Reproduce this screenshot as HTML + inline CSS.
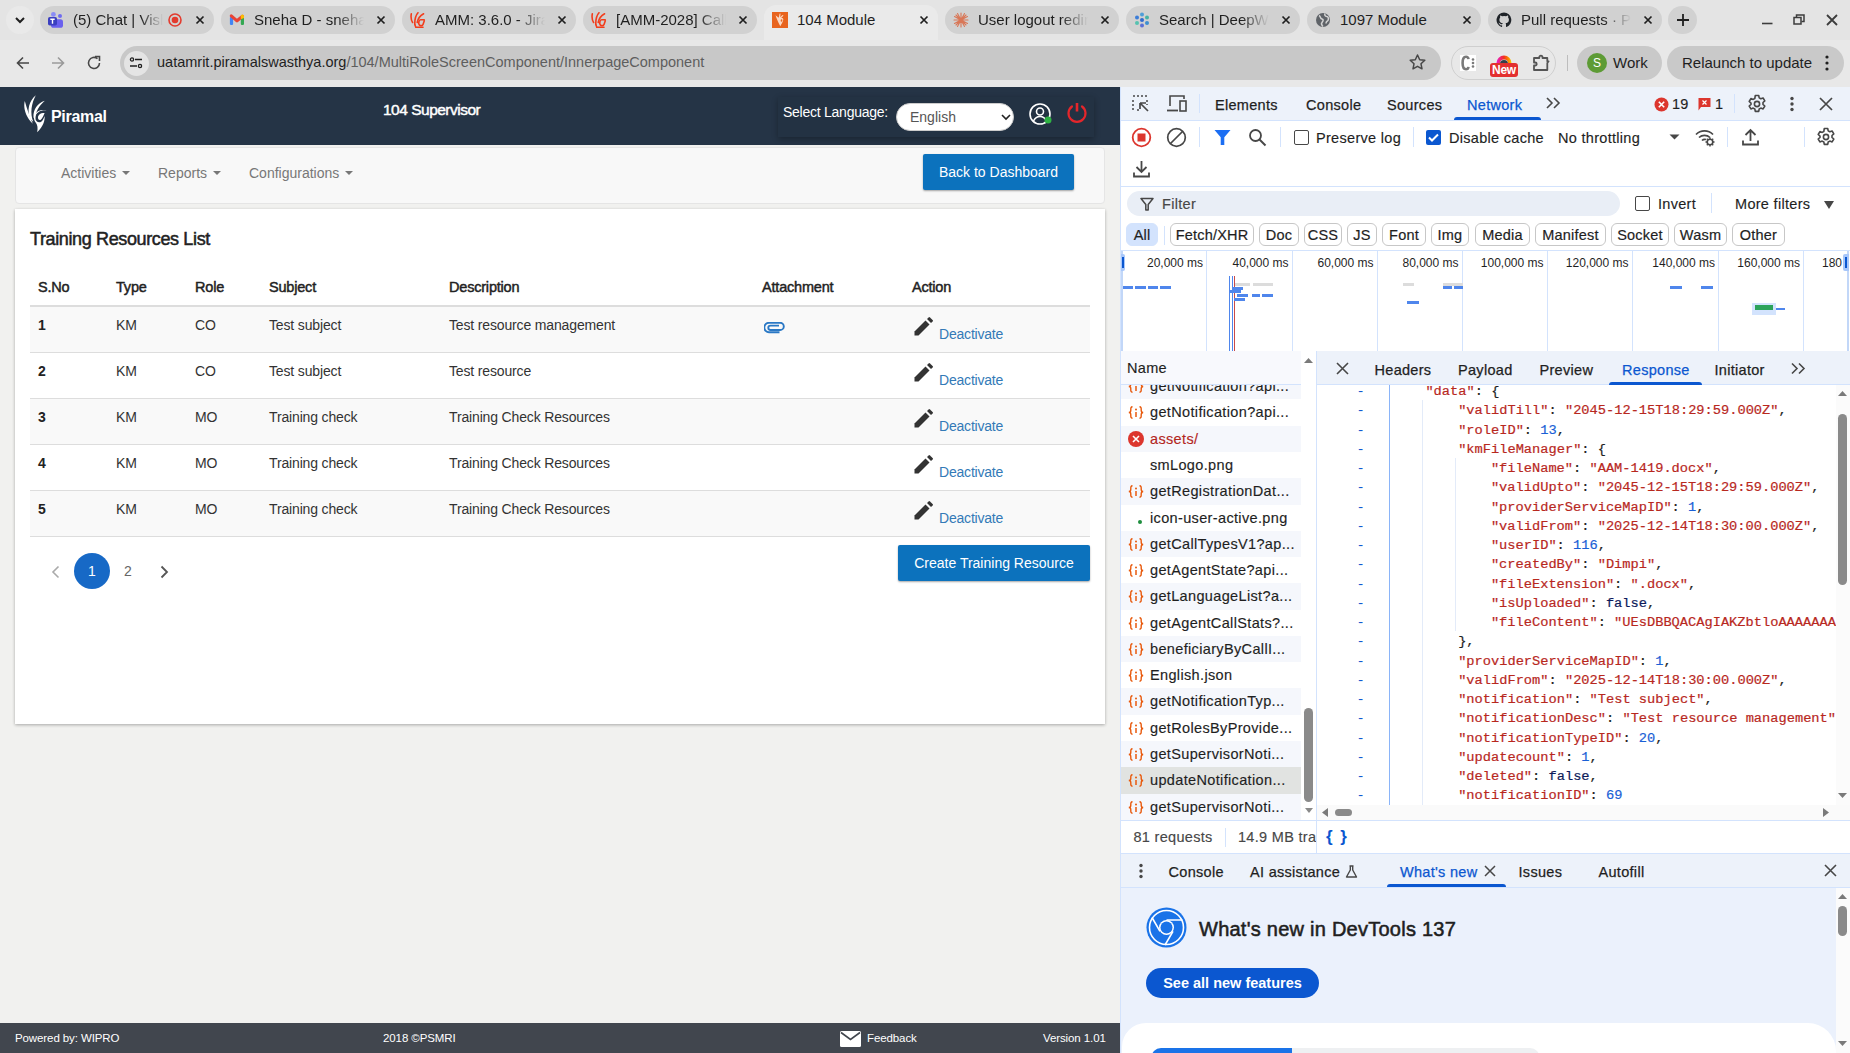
<!DOCTYPE html>
<html><head><meta charset="utf-8">
<style>
*{box-sizing:border-box;margin:0;padding:0}
html,body{width:1850px;height:1053px;overflow:hidden;background:#e4e4e4;font-family:"Liberation Sans",sans-serif;color:#1f1f1f}
.a{position:absolute}
.nw{white-space:nowrap}
/* chrome */
#strip{left:0;top:0;width:1850px;height:40px;background:#e4e4e4}
.tab{top:6px;height:28px;width:174px;border-radius:14px;background:#d1d1d1}
.tab.act{background:#eaeaea;top:5px;height:35px;border-radius:12px 12px 0 0}
.tt{position:absolute;left:33px;top:5px;font-size:15px;line-height:17px;color:#1f1f1f;white-space:nowrap;overflow:hidden;width:110px;-webkit-mask-image:linear-gradient(90deg,#000 75%,transparent 100%)}
.tx{position:absolute;left:155px;top:9px;width:10px;height:10px}
.fav{position:absolute;left:8px;top:6px;width:16px;height:16px}
#toolbar{left:0;top:40px;width:1850px;height:47px;background:#e8e8e8}
#url{left:120px;top:46px;width:1321px;height:34px;border-radius:17px;background:#c8c8c8}
/* app */
#app{left:0;top:87px;width:1120px;height:966px;background:#f1f1ef;overflow:hidden}
#hdr{left:0;top:0;width:1120px;height:58px;background:#253446}
#nav{left:15px;top:60px;width:1090px;height:57px;background:#f8f8f8;border:1px solid #e5e5e5;border-radius:4px}
.navi{position:absolute;top:17px;font-size:14px;color:#777;white-space:nowrap}
.caret{display:inline-block;width:0;height:0;border-left:4px solid transparent;border-right:4px solid transparent;border-top:4px solid #777;vertical-align:middle;margin-left:6px;margin-top:-2px}
.btn{position:absolute;background:#0c72bd;color:#fff;font-size:14px;border-radius:2px;box-shadow:0 1px 2px rgba(0,0,0,.35);text-align:center;white-space:nowrap}
#card{left:15px;top:122px;width:1090px;height:515px;background:#fff;box-shadow:0 1px 3px rgba(0,0,0,.3)}
.th{position:absolute;top:69.5px;font-size:14.5px;color:#222;letter-spacing:-0.2px;-webkit-text-stroke:0.45px #222;white-space:nowrap}
.row{position:absolute;left:15px;width:1060px;height:46px;border-bottom:1px solid #ddd}
.td{position:absolute;top:10px;font-size:14px;color:#333;white-space:nowrap;letter-spacing:-0.15px}
.deact{position:absolute;left:909px;top:19.3px;font-size:14px;color:#337ab7;white-space:nowrap;letter-spacing:-0.2px}
.pen{position:absolute;left:884px;top:10px;width:19px;height:19px}
#footer{left:0;top:936px;width:1120px;height:30px;background:#41464e;color:#fff;font-size:11.5px;letter-spacing:-0.1px}
/* devtools */
#dt{left:1120px;top:87px;width:730px;height:966px;background:#fff;border-left:1px solid #d3e3fd;overflow:hidden}
.dtt{font-size:14.5px;line-height:17px;color:#1f1f1f;letter-spacing:0.3px;-webkit-text-stroke:0.15px currentColor}
.med{-webkit-text-stroke:0.25px currentColor}
.dtn{font-size:14.5px;line-height:17px;letter-spacing:0.35px;margin-top:1px;-webkit-text-stroke:0.15px currentColor}
.chip{-webkit-text-stroke:0.2px #1f1f1f;top:223px;height:23px;border:1px solid #c7c7c7;border-radius:6px;font-size:14.5px;line-height:22px;text-align:center;color:#1f1f1f;white-space:nowrap;letter-spacing:0.2px}
.tlab{top:256px;font-size:12px;line-height:14px;text-align:right;color:#1f1f1f}
.mono{font-family:"Liberation Mono",monospace;font-size:13.7px;line-height:19.24px;color:#1f1f1f;-webkit-text-stroke:0.2px currentColor}
</style></head><body>

<!-- ============ BROWSER CHROME ============ -->
<div id="strip" class="a"></div>
<div class="a" style="left:6px;top:6px;width:28px;height:28px;border-radius:14px;background:#e9e9e9"></div>
<svg class="a" style="left:14px;top:15px" width="12" height="10" viewBox="0 0 12 10"><path d="M2 3 L6 7 L10 3" stroke="#1f1f1f" stroke-width="2" fill="none"/></svg>

<div id="tabs">
<div class="a tab" style="left:40px">
  <svg class="fav" viewBox="0 0 16 16"><circle cx="5.4" cy="2.4" r="2.4" fill="#8a8cf5"/><circle cx="12" cy="4" r="2" fill="#6f6cf0"/><rect x="3" y="7.2" width="12" height="8.6" rx="2.6" fill="#6a60ee"/><rect x="0" y="4.9" width="9" height="8.6" rx="1.8" fill="#3b3fc0"/><path d="M2.3 7.3h4.4M4.5 7.3v4.5" stroke="#fff" stroke-width="1.4"/></svg>
  <div class="tt" style="width:90px">(5) Chat | Vish</div>
  <svg class="a" style="left:127px;top:6px" width="16" height="16" viewBox="0 0 16 16"><circle cx="8" cy="8" r="6" stroke="#e33b2e" stroke-width="1.6" fill="none"/><circle cx="8" cy="8" r="3.3" fill="#e33b2e"/></svg>
  <svg class="tx" viewBox="0 0 10 10"><path d="M1.5 1.5L8.5 8.5M8.5 1.5L1.5 8.5" stroke="#1f1f1f" stroke-width="1.7"/></svg>
</div>
<div class="a tab" style="left:221px">
  <svg class="fav" viewBox="0 0 16 16"><rect x="0.9" y="5" width="3.2" height="7.9" rx="0.8" fill="#4285f4"/><rect x="11.8" y="5" width="3.2" height="7.9" rx="0.8" fill="#34a853"/><path d="M2.3 3.8L8 8.8L13.5 4.3" stroke="#ea4335" stroke-width="3.1" fill="none" stroke-linecap="round" stroke-linejoin="round"/><path d="M11.8 4.2A1.6 1.6 0 0 1 15 4.2V6L11.8 7.2Z" fill="#fbbc04"/></svg>
  <div class="tt">Sneha D - sneha.d</div>
  <svg class="tx" viewBox="0 0 10 10"><path d="M1.5 1.5L8.5 8.5M8.5 1.5L1.5 8.5" stroke="#1f1f1f" stroke-width="1.7"/></svg>
</div>
<div class="a tab" style="left:402px">
  <svg class="fav" viewBox="0 0 16 16"><g stroke="#f23d1c" stroke-width="1.6" fill="none" stroke-linecap="round"><path d="M1.3 1.8C0.8 5 1.2 8.5 2.6 10.5"/><path d="M8 0.8C6 3 4.6 7 4.8 12.5"/><path d="M13.6 1.8C10.5 3.5 8 6 7.2 10.5"/><path d="M14.2 7.8H10.6C8.6 7.8 8.4 11.5 9.2 12.8C10 14 12.5 14 13 12.5L14.3 8.8"/><path d="M4.8 12.5L5.8 15.2H13"/></g></svg>
  <div class="tt">AMM: 3.6.0 - Jira</div>
  <svg class="tx" viewBox="0 0 10 10"><path d="M1.5 1.5L8.5 8.5M8.5 1.5L1.5 8.5" stroke="#1f1f1f" stroke-width="1.7"/></svg>
</div>
<div class="a tab" style="left:583px">
  <svg class="fav" viewBox="0 0 16 16"><g stroke="#f23d1c" stroke-width="1.6" fill="none" stroke-linecap="round"><path d="M1.3 1.8C0.8 5 1.2 8.5 2.6 10.5"/><path d="M8 0.8C6 3 4.6 7 4.8 12.5"/><path d="M13.6 1.8C10.5 3.5 8 6 7.2 10.5"/><path d="M14.2 7.8H10.6C8.6 7.8 8.4 11.5 9.2 12.8C10 14 12.5 14 13 12.5L14.3 8.8"/><path d="M4.8 12.5L5.8 15.2H13"/></g></svg>
  <div class="tt">[AMM-2028] Call</div>
  <svg class="tx" viewBox="0 0 10 10"><path d="M1.5 1.5L8.5 8.5M8.5 1.5L1.5 8.5" stroke="#1f1f1f" stroke-width="1.7"/></svg>
</div>
<div class="a tab act" style="left:764px">
  <svg class="fav" style="top:7px" viewBox="0 0 16 16"><rect width="16" height="16" fill="#e8641e"/><path d="M3.5 3.2C4.5 6 5.5 9 8.3 14.2C9.5 12 11 10 11.3 7.5C11.5 6 10 5.5 9 6.2L11.5 3.5L10.5 3L8.2 5.2L8.5 1.5L7.5 1.8L6.8 5.8C5.5 5 4.5 4 3.5 3.2Z M9.4 7.2C10.3 7 10.6 8 10.2 9C9.8 10 9 10 8.8 9.2C8.6 8.4 8.8 7.4 9.4 7.2Z" fill="#fbd9c4" fill-rule="evenodd"/></svg>
  <div class="tt" style="top:6px;-webkit-mask-image:none">104 Module</div>
  <svg class="tx" style="top:10px" viewBox="0 0 10 10"><path d="M1.5 1.5L8.5 8.5M8.5 1.5L1.5 8.5" stroke="#1f1f1f" stroke-width="1.7"/></svg>
</div>
<div class="a tab" style="left:945px">
  <svg class="fav" viewBox="0 0 16 16"><g stroke="#d97757" stroke-width="1.1" stroke-linecap="round"><path d="M8 1v14M1 8h14M3 3l10 10M13 3L3 13M4.5 1.5l7 13M11.5 1.5l-7 13M1.5 4.5l13 7M1.5 11.5l13-7"/></g></svg>
  <div class="tt">User logout redire</div>
  <svg class="tx" viewBox="0 0 10 10"><path d="M1.5 1.5L8.5 8.5M8.5 1.5L1.5 8.5" stroke="#1f1f1f" stroke-width="1.7"/></svg>
</div>
<div class="a tab" style="left:1126px">
  <svg class="fav" viewBox="0 0 16 16"><circle cx="8" cy="2.5" r="2" fill="#4f9ed8"/><circle cx="13" cy="5.5" r="2" fill="#46b3a6"/><circle cx="13" cy="11" r="2" fill="#3d8fd0"/><circle cx="8" cy="13.5" r="2" fill="#5b6fd6"/><circle cx="3" cy="11" r="2" fill="#56c2b0"/><circle cx="3" cy="5.5" r="2" fill="#3b7dd8"/><circle cx="8" cy="8" r="2" fill="#2f6bd0"/></svg>
  <div class="tt">Search | DeepWiki</div>
  <svg class="tx" viewBox="0 0 10 10"><path d="M1.5 1.5L8.5 8.5M8.5 1.5L1.5 8.5" stroke="#1f1f1f" stroke-width="1.7"/></svg>
</div>
<div class="a tab" style="left:1307px">
  <svg class="fav" viewBox="0 0 16 16"><circle cx="8" cy="8" r="7" fill="#5f6368"/><path d="M4 3.5c2 1 1 3 3 3.5s1 2 0 3.5c-1 1 0 3 1 4M10 1.5c-1 2 1 3 2 3s2 2 1 4c-1 1-2 1-2 3" stroke="#d4d4d4" stroke-width="1.5" fill="none"/></svg>
  <div class="tt" style="-webkit-mask-image:none">1097 Module</div>
  <svg class="tx" viewBox="0 0 10 10"><path d="M1.5 1.5L8.5 8.5M8.5 1.5L1.5 8.5" stroke="#1f1f1f" stroke-width="1.7"/></svg>
</div>
<div class="a tab" style="left:1488px">
  <svg class="fav" viewBox="0 0 16 16"><path d="M8 0.5a7.5 7.5 0 0 0-2.4 14.6c.4.1.5-.2.5-.4v-1.4c-2.1.5-2.5-1-2.5-1-.3-.9-.8-1.1-.8-1.1-.7-.5.1-.5.1-.5.8.1 1.2.8 1.2.8.7 1.2 1.8.8 2.2.6.1-.5.3-.8.5-1-1.7-.2-3.4-.8-3.4-3.7 0-.8.3-1.5.8-2-.1-.2-.3-1 .1-2 0 0 .6-.2 2 .8a7 7 0 0 1 3.7 0c1.4-1 2-.8 2-.8.4 1 .2 1.8.1 2 .5.5.8 1.2.8 2 0 2.9-1.7 3.5-3.4 3.7.3.2.5.7.5 1.4v2.1c0 .2.1.5.5.4A7.5 7.5 0 0 0 8 .5z" fill="#1f2328"/></svg>
  <div class="tt">Pull requests · PSM</div>
  <svg class="tx" viewBox="0 0 10 10"><path d="M1.5 1.5L8.5 8.5M8.5 1.5L1.5 8.5" stroke="#1f1f1f" stroke-width="1.7"/></svg>
</div>
</div>
<div class="a" style="left:1668px;top:6px;width:29px;height:28px;border-radius:14px;background:#d1d1d1"></div>
<svg class="a" style="left:1676px;top:13px" width="14" height="14" viewBox="0 0 14 14"><path d="M7 1v12M1 7h12" stroke="#1f1f1f" stroke-width="1.8"/></svg>
<svg class="a" style="left:1762px;top:22px" width="11" height="3" viewBox="0 0 11 3"><path d="M0 1.5h10.5" stroke="#3c3c3c" stroke-width="1.6"/></svg>
<svg class="a" style="left:1793px;top:14px" width="12" height="11" viewBox="0 0 12 11"><path d="M3.5 3V1h7.5v6.5H8.5" stroke="#3c3c3c" stroke-width="1.5" fill="none"/><rect x="1" y="3.5" width="7" height="6.5" stroke="#3c3c3c" stroke-width="1.5" fill="none"/></svg>
<svg class="a" style="left:1826px;top:14px" width="12" height="12" viewBox="0 0 12 12"><path d="M1 1l10 10M11 1L1 11" stroke="#3c3c3c" stroke-width="1.8"/></svg>
<div id="toolbar" class="a"></div>
<svg class="a" style="left:15px;top:55px" width="16" height="16" viewBox="0 0 16 16"><path d="M14 8H2.5M8 2.5L2.5 8L8 13.5" stroke="#474747" stroke-width="1.6" fill="none"/></svg>
<svg class="a" style="left:50px;top:55px" width="16" height="16" viewBox="0 0 16 16"><path d="M2 8h11.5M8 2.5L13.5 8L8 13.5" stroke="#9a9a9a" stroke-width="1.6" fill="none"/></svg>
<svg class="a" style="left:86px;top:55px" width="16" height="16" viewBox="0 0 16 16"><path d="M13.5 8A5.5 5.5 0 1 1 11.5 3.7" stroke="#474747" stroke-width="1.6" fill="none"/><path d="M9 1.5h4.5V6" stroke="#474747" stroke-width="1.6" fill="none"/></svg>
<div id="url" class="a"></div>
<div class="a" style="left:124px;top:51px;width:25px;height:25px;border-radius:13px;background:#e4e4e4"></div>
<svg class="a" style="left:128px;top:55px" width="16" height="16" viewBox="0 0 16 16"><circle cx="4" cy="4.5" r="1.6" stroke="#1f1f1f" stroke-width="1.3" fill="none"/><path d="M7 4.5h7M2 11h7" stroke="#1f1f1f" stroke-width="1.4"/><circle cx="12" cy="11" r="1.6" stroke="#1f1f1f" stroke-width="1.3" fill="none"/></svg>
<div class="a nw" style="left:157px;top:54px;font-size:14.5px;line-height:17px;color:#1f1f1f">uatamrit.piramalswasthya.org<span style="color:#5e5e5e">/104/MultiRoleScreenComponent/InnerpageComponent</span></div>
<svg class="a" style="left:1408px;top:53px" width="19" height="19" viewBox="0 0 19 19"><path d="M9.5 2l2.2 4.7 5.1.6-3.8 3.5 1 5-4.5-2.5-4.5 2.5 1-5L2.2 7.3l5.1-.6z" stroke="#474747" stroke-width="1.5" fill="none" stroke-linejoin="round"/></svg>
<div class="a" style="left:1451px;top:46px;width:105px;height:34px;border-radius:17px;border:1px solid #cfcfcf"></div>
<div class="a" style="left:1460px;top:55px;width:16px;height:16px;background:#fff"></div>
<svg class="a" style="left:1460px;top:55px" width="16" height="16" viewBox="0 0 16 16"><path d="M8.5 4.2C8.3 2.6 7.6 1.8 6 1.8C3.6 1.8 2.6 4 2.6 8S3.6 14.2 6 14.2C7.6 14.2 8.3 13.4 8.5 11.8" stroke="#7a7a7a" stroke-width="2.6" fill="none"/><circle cx="13" cy="4.5" r="1.3" fill="#7a7a7a"/><circle cx="13" cy="8" r="1.3" fill="#7a7a7a"/><circle cx="13" cy="11.5" r="1.3" fill="#7a7a7a"/></svg>
<svg class="a" style="left:1496px;top:55px" width="16" height="9" viewBox="0 0 16 9"><defs><linearGradient id="rg" x1="0" x2="1"><stop offset="0" stop-color="#e81ccf"/><stop offset="0.5" stop-color="#f2321e"/><stop offset="0.8" stop-color="#fb8c00"/><stop offset="1" stop-color="#f5d000"/></linearGradient></defs><path d="M0.5 9V8A7.5 7.5 0 0 1 15.5 8V9H12V8.5A4 4 0 0 0 4 8.5V9Z" fill="url(#rg)"/><path d="M4 9A4 4 0 0 1 12 9Z" fill="#35404a"/></svg>
<div class="a" style="left:1490px;top:63px;width:28px;height:14px;border-radius:3px;background:#e3302f;color:#fff;font-size:12px;font-weight:bold;line-height:14px;text-align:center;letter-spacing:-0.3px">New</div>
<svg class="a" style="left:1532px;top:53px" width="18" height="18" viewBox="0 0 18 18"><path d="M2 5H7.3V4.2A1.6 1.6 0 0 1 10.5 4.2V5H15.3V8.3H16.6L15.3 10V17H2V12.5H3.2A1.5 1.5 0 0 0 3.2 9.5H2Z" stroke="#555" stroke-width="1.8" fill="none" stroke-linejoin="round"/></svg>
<div class="a" style="left:1567px;top:55px;width:1px;height:16px;background:#bdbdbd"></div>
<div class="a" style="left:1577px;top:46px;width:85px;height:34px;border-radius:17px;background:#c9c9c9"></div>
<div class="a" style="left:1587px;top:53px;width:20px;height:20px;border-radius:10px;background:#5d9b35;color:#fff;font-size:12px;line-height:20px;text-align:center">S</div>
<div class="a nw" style="left:1613px;top:54px;font-size:15px;line-height:17px;color:#1f1f1f">Work</div>
<div class="a" style="left:1667px;top:46px;width:177px;height:34px;border-radius:17px;background:#c9c9c9"></div>
<div class="a nw" style="left:1682px;top:54px;font-size:15px;line-height:17px;color:#1f1f1f">Relaunch to update</div>
<svg class="a" style="left:1824px;top:54px" width="6" height="18" viewBox="0 0 6 18"><circle cx="3" cy="3" r="1.6" fill="#1f1f1f"/><circle cx="3" cy="9" r="1.6" fill="#1f1f1f"/><circle cx="3" cy="15" r="1.6" fill="#1f1f1f"/></svg>

<!-- ============ APP ============ -->
<div id="app" class="a">
 <div id="hdr" class="a">
  <svg class="a" style="left:24px;top:8px" width="24" height="38" viewBox="0 0 24 38"><path d="M0.8 6C-0.8 12 1 21.5 8.8 28.8C5.8 22 3 14 0.8 6Z" fill="#fff"/><path d="M11.8 0.3C5 6 2.5 15.5 6.3 24L9.3 27C5.8 18 7.5 8.5 11.8 0.3Z" fill="#fff"/><path d="M20.8 5.8C13.5 8 9 14.5 9.5 22.5L11.2 24.5C11.5 16.5 15 10.8 20.8 5.8Z" fill="#fff"/><path d="M22.8 15.3C17 14.6 11.5 17.3 11.3 22.7C11.2 26.3 14.5 28.3 17.2 26.7C18.8 25.6 19.8 23.2 20.6 21C21 25.5 19.5 31 13.2 37.3C14 33 13.5 30 12 28C10.3 26 9.8 24 10 22C10.8 16.8 16 14 22.8 15.3Z M20.6 18.1C18.3 17.4 14.8 18.3 14 21.8C13.6 24 14.9 25.6 16.5 24.9C18.2 24.1 19.6 20.6 20.6 18.1Z" fill="#fff" fill-rule="evenodd"/></svg>
  <div class="a nw" style="left:51px;top:21px;font-size:16px;font-weight:bold;color:#fff;letter-spacing:-0.3px">Piramal</div>
  <div class="a nw" style="left:383px;top:14px;font-size:15.5px;color:#fff;letter-spacing:-0.5px;-webkit-text-stroke:0.45px #fff">104 Supervisor</div>
  <div class="a" style="left:778px;top:10px;width:316px;height:40px;background:#233243;box-shadow:0 2px 6px rgba(0,0,0,.3)"></div>
  <div class="a nw" style="left:783px;top:17px;font-size:14px;color:#fff;letter-spacing:-0.25px">Select Language:</div>
  <div class="a" style="left:896px;top:16px;width:118px;height:28px;border-radius:14px;background:#fff;border:1px solid #ccc"></div>
  <div class="a nw" style="left:910px;top:22px;font-size:14px;color:#555">English</div>
  <svg class="a" style="left:1001px;top:27px" width="10" height="7" viewBox="0 0 10 7"><path d="M1 1l4 4 4-4" stroke="#222" stroke-width="1.6" fill="none"/></svg>
  <svg class="a" style="left:1029px;top:16px" width="24" height="24" viewBox="0 0 24 24"><circle cx="11" cy="11" r="10" stroke="#fff" stroke-width="1.6" fill="none"/><circle cx="11" cy="8.5" r="3.5" stroke="#fff" stroke-width="1.6" fill="none"/><path d="M4.5 18c1.5-3 4-4.5 6.5-4.5s5 1.5 6.5 4.5" stroke="#fff" stroke-width="1.6" fill="none"/><circle cx="19" cy="17" r="3.5" fill="#2fb344"/></svg>
  <svg class="a" style="left:1066px;top:14px" width="22" height="24" viewBox="0 0 22 24"><path d="M11 2v8.5" stroke="#e5262b" stroke-width="2.6"/><path d="M6 5.5A8.5 8.5 0 1 0 16 5.5" stroke="#e5262b" stroke-width="2.2" fill="none" stroke-linecap="round"/></svg>
 </div>
 <div id="nav" class="a">
  <div class="navi" style="left:45px">Activities<span class="caret"></span></div>
  <div class="navi" style="left:142px">Reports<span class="caret"></span></div>
  <div class="navi" style="left:233px">Configurations<span class="caret"></span></div>
 </div>
 <div class="btn" style="left:923px;top:67px;width:151px;height:36px;line-height:36px">Back to Dashboard</div>

 <div id="card" class="a">
  <div class="a nw" style="left:15px;top:20.3px;font-size:18px;color:#222;letter-spacing:-0.37px;-webkit-text-stroke:0.5px #222">Training Resources List</div>
  <div class="th" style="left:23px">S.No</div>
  <div class="th" style="left:101px">Type</div>
  <div class="th" style="left:180px">Role</div>
  <div class="th" style="left:254px">Subject</div>
  <div class="th" style="left:434px">Description</div>
  <div class="th" style="left:747px">Attachment</div>
  <div class="th" style="left:897px">Action</div>
  <div class="a" style="left:15px;top:96px;width:1060px;height:2px;background:#ddd"></div>
  <div class="row" style="top:98px;background:#f9f9f9">
   <div class="td" style="left:8px;font-weight:bold;color:#222">1</div><div class="td" style="left:86px">KM</div><div class="td" style="left:165px">CO</div><div class="td" style="left:239px">Test subject</div><div class="td" style="left:419px">Test resource management</div>
   <svg class="a" style="left:734px;top:15px" width="21" height="12" viewBox="0 0 21 12"><path d="M15.5 10.2H5A4.7 4.7 0 0 1 5 0.8H16.2A3.6 3.6 0 0 1 16.2 8H6.5A2.2 2.2 0 0 1 6.5 3.6H15" stroke="#2a78c5" stroke-width="1.9" fill="none"/></svg>
   <svg class="pen" viewBox="0 0 19 19"><path d="M0.5 14.5L11.5 3.5L15.5 7.5L4.5 18.5H0.5Z" fill="#333"/><path d="M13 2L14.6 0.4a1 1 0 0 1 1.4 0L18.6 3a1 1 0 0 1 0 1.4L17 6Z" fill="#333"/></svg><div class="deact">Deactivate</div>
  </div>
  <div class="row" style="top:144px;background:#fff">
   <div class="td" style="left:8px;font-weight:bold;color:#222">2</div><div class="td" style="left:86px">KM</div><div class="td" style="left:165px">CO</div><div class="td" style="left:239px">Test subject</div><div class="td" style="left:419px">Test resource</div>
   <svg class="pen" viewBox="0 0 19 19"><path d="M0.5 14.5L11.5 3.5L15.5 7.5L4.5 18.5H0.5Z" fill="#333"/><path d="M13 2L14.6 0.4a1 1 0 0 1 1.4 0L18.6 3a1 1 0 0 1 0 1.4L17 6Z" fill="#333"/></svg><div class="deact">Deactivate</div>
  </div>
  <div class="row" style="top:190px;background:#f9f9f9">
   <div class="td" style="left:8px;font-weight:bold;color:#222">3</div><div class="td" style="left:86px">KM</div><div class="td" style="left:165px">MO</div><div class="td" style="left:239px">Training check</div><div class="td" style="left:419px">Training Check Resources</div>
   <svg class="pen" viewBox="0 0 19 19"><path d="M0.5 14.5L11.5 3.5L15.5 7.5L4.5 18.5H0.5Z" fill="#333"/><path d="M13 2L14.6 0.4a1 1 0 0 1 1.4 0L18.6 3a1 1 0 0 1 0 1.4L17 6Z" fill="#333"/></svg><div class="deact">Deactivate</div>
  </div>
  <div class="row" style="top:236px;background:#fff">
   <div class="td" style="left:8px;font-weight:bold;color:#222">4</div><div class="td" style="left:86px">KM</div><div class="td" style="left:165px">MO</div><div class="td" style="left:239px">Training check</div><div class="td" style="left:419px">Training Check Resources</div>
   <svg class="pen" viewBox="0 0 19 19"><path d="M0.5 14.5L11.5 3.5L15.5 7.5L4.5 18.5H0.5Z" fill="#333"/><path d="M13 2L14.6 0.4a1 1 0 0 1 1.4 0L18.6 3a1 1 0 0 1 0 1.4L17 6Z" fill="#333"/></svg><div class="deact">Deactivate</div>
  </div>
  <div class="row" style="top:282px;background:#f9f9f9">
   <div class="td" style="left:8px;font-weight:bold;color:#222">5</div><div class="td" style="left:86px">KM</div><div class="td" style="left:165px">MO</div><div class="td" style="left:239px">Training check</div><div class="td" style="left:419px">Training Check Resources</div>
   <svg class="pen" viewBox="0 0 19 19"><path d="M0.5 14.5L11.5 3.5L15.5 7.5L4.5 18.5H0.5Z" fill="#333"/><path d="M13 2L14.6 0.4a1 1 0 0 1 1.4 0L18.6 3a1 1 0 0 1 0 1.4L17 6Z" fill="#333"/></svg><div class="deact">Deactivate</div>
  </div>
  <svg class="a" style="left:36px;top:356px" width="10" height="14" viewBox="0 0 10 14"><path d="M7.5 1.5L2 7l5.5 5.5" stroke="#aaa" stroke-width="1.6" fill="none"/></svg>
  <div class="a" style="left:59px;top:344px;width:36px;height:36px;border-radius:18px;background:#1769c6;color:#fff;font-size:14px;line-height:36px;text-align:center">1</div>
  <div class="a nw" style="left:109px;top:354px;font-size:14px;color:#666">2</div>
  <svg class="a" style="left:144px;top:356px" width="10" height="14" viewBox="0 0 10 14"><path d="M2.5 1.5L8 7l-5.5 5.5" stroke="#555" stroke-width="1.8" fill="none"/></svg>
  <div class="btn" style="left:883px;top:336px;width:192px;height:36px;line-height:36px">Create Training Resource</div>
 </div>

 <div id="footer" class="a">
  <div class="a nw" style="left:15px;top:9px">Powered by: WIPRO</div>
  <div class="a nw" style="left:383px;top:9px">2018 ©PSMRI</div>
  <svg class="a" style="left:840px;top:8px" width="21" height="16" viewBox="0 0 21 16"><rect x="0" y="0" width="21" height="16" rx="1.5" fill="#fff"/><path d="M1 1.5l9.5 7 9.5-7" stroke="#41464e" stroke-width="1.6" fill="none"/></svg>
  <div class="a nw" style="left:867px;top:9px">Feedback</div>
  <div class="a nw" style="left:1043px;top:9px">Version 1.01</div>
 </div>
</div>

<!-- ============ DEVTOOLS ============ -->
<div id="dt" class="a"></div>
<!-- devtools top -->
<div class="a" style="left:1121px;top:87px;width:729px;height:34px;background:#edf2fa;border-bottom:1px solid #d3e3fd"></div>
<svg class="a" style="left:1131px;top:94px" width="20" height="20" viewBox="0 0 20 20"><path d="M2 2h2M6 2h2M10 2h2M14 2h2M2 6v2M2 10v2M2 14v2M6 16h2M16 6v2M16 10v1" stroke="#474747" stroke-width="1.5"/><path d="M9 9l8 8M9 9h6M9 9v6" stroke="#474747" stroke-width="1.7" fill="none"/></svg>
<svg class="a" style="left:1166px;top:94px" width="22" height="20" viewBox="0 0 22 20"><path d="M4 12V2h14v3" stroke="#474747" stroke-width="1.6" fill="none"/><path d="M1 16.5h11" stroke="#474747" stroke-width="1.8"/><rect x="14" y="7" width="6" height="10" stroke="#474747" stroke-width="1.6" fill="none"/></svg>
<div class="a" style="left:1199px;top:94px;width:1px;height:19px;background:#d3e3fd"></div>
<div class="a nw dtt med" style="left:1215px;top:97px">Elements</div>
<div class="a nw dtt med" style="left:1306px;top:97px">Console</div>
<div class="a nw dtt med" style="left:1387px;top:97px">Sources</div>
<div class="a nw dtt med" style="left:1467px;top:97px;color:#0b57d0">Network</div>
<div class="a" style="left:1454px;top:117px;width:87px;height:3px;background:#0b57d0;border-radius:3px 3px 0 0"></div>
<svg class="a" style="left:1545px;top:96px" width="16" height="14" viewBox="0 0 16 14"><path d="M2 2l5 5-5 5M9 2l5 5-5 5" stroke="#474747" stroke-width="1.6" fill="none"/></svg>
<svg class="a" style="left:1654px;top:97px" width="15" height="15" viewBox="0 0 15 15"><circle cx="7.5" cy="7.5" r="7" fill="#dc362e"/><path d="M4.8 4.8l5.4 5.4M10.2 4.8l-5.4 5.4" stroke="#fff" stroke-width="1.6"/></svg>
<div class="a nw dtt" style="left:1672px;top:96px">19</div>
<svg class="a" style="left:1698px;top:97px" width="13" height="14" viewBox="0 0 13 14"><path d="M0.5 1h12v9H3l-2.5 3.5z" fill="#dc362e"/><path d="M4.5 3.5l4 4M8.5 3.5l-4 4" stroke="#fff" stroke-width="1.2"/></svg>
<div class="a nw dtt" style="left:1715px;top:96px">1</div>
<div class="a" style="left:1734px;top:94px;width:1px;height:19px;background:#d3e3fd"></div>
<svg class="a" style="left:1747px;top:94px" width="20" height="20" viewBox="0 0 20 20"><path d="M8.3 1.5h3.4l.5 2.4 1.6.9 2.3-.8 1.7 2.9-1.8 1.6v1.9l1.8 1.6-1.7 2.9-2.3-.8-1.6.9-.5 2.4H8.3l-.5-2.4-1.6-.9-2.3.8-1.7-2.9 1.8-1.6V9.1L2.2 7.5l1.7-2.9 2.3.8 1.6-.9z" stroke="#474747" stroke-width="1.6" fill="none" stroke-linejoin="round"/><circle cx="10" cy="10" r="2.6" stroke="#474747" stroke-width="1.6" fill="none"/></svg>
<svg class="a" style="left:1789px;top:96px" width="6" height="16" viewBox="0 0 6 16"><circle cx="3" cy="2.5" r="1.7" fill="#474747"/><circle cx="3" cy="8" r="1.7" fill="#474747"/><circle cx="3" cy="13.5" r="1.7" fill="#474747"/></svg>
<svg class="a" style="left:1819px;top:97px" width="14" height="14" viewBox="0 0 14 14"><path d="M1 1l12 12M13 1L1 13" stroke="#474747" stroke-width="1.7"/></svg>

<!-- toolbar -->
<div class="a" style="left:1121px;top:186px;width:729px;height:1px;background:#d3e3fd"></div>
<svg class="a" style="left:1131px;top:127px" width="21" height="21" viewBox="0 0 21 21"><circle cx="10.5" cy="10.5" r="8.8" stroke="#dc362e" stroke-width="1.8" fill="none"/><rect x="6.5" y="6.5" width="8" height="8" fill="#dc362e"/></svg>
<svg class="a" style="left:1166px;top:127px" width="21" height="21" viewBox="0 0 21 21"><circle cx="10.5" cy="10.5" r="8.8" stroke="#474747" stroke-width="1.7" fill="none"/><path d="M4.5 16.5l12-12" stroke="#474747" stroke-width="1.7"/></svg>
<div class="a" style="left:1199px;top:127px;width:1px;height:20px;background:#d3e3fd"></div>
<svg class="a" style="left:1214px;top:129px" width="17" height="17" viewBox="0 0 17 17"><path d="M0.5 1h16L10.3 8.2V16H6.7V8.2z" fill="#1b6ef3"/></svg>
<svg class="a" style="left:1248px;top:128px" width="19" height="19" viewBox="0 0 19 19"><circle cx="7.5" cy="7.5" r="5.5" stroke="#474747" stroke-width="1.8" fill="none"/><path d="M11.5 11.5l6 6" stroke="#474747" stroke-width="2"/></svg>
<div class="a" style="left:1280px;top:127px;width:1px;height:20px;background:#d3e3fd"></div>
<div class="a" style="left:1294px;top:130px;width:15px;height:15px;border:1.5px solid #474747;border-radius:2px;background:#fff"></div>
<div class="a nw dtt" style="left:1316px;top:130px">Preserve log</div>
<div class="a" style="left:1413px;top:127px;width:1px;height:20px;background:#d3e3fd"></div>
<div class="a" style="left:1426px;top:130px;width:15px;height:15px;border-radius:2px;background:#0b57d0"></div>
<svg class="a" style="left:1426px;top:130px" width="15" height="15" viewBox="0 0 15 15"><path d="M3 7.5l3 3 6-6" stroke="#fff" stroke-width="2" fill="none"/></svg>
<div class="a nw dtt" style="left:1449px;top:130px">Disable cache</div>
<div class="a nw dtt" style="left:1558px;top:130px">No throttling</div>
<svg class="a" style="left:1669px;top:134px" width="11" height="6" viewBox="0 0 11 6"><path d="M0.5 0.5h10L5.5 5.5z" fill="#474747"/></svg>
<svg class="a" style="left:1694px;top:127px" width="22" height="20" viewBox="0 0 22 20"><path d="M2 7.5a12 12 0 0 1 17 0M5 10.5a8 8 0 0 1 11 0M8 13.5a4 4 0 0 1 4-1" stroke="#474747" stroke-width="1.7" fill="none"/><circle cx="16" cy="15" r="2.8" stroke="#474747" stroke-width="1.6" fill="none"/><path d="M16 10.5v1.5M16 18v1.5M11.5 15H13M19 15h1.5M12.8 11.8l1 1M18.2 17.2l1 1M12.8 18.2l1-1M18.2 12.8l1-1" stroke="#474747" stroke-width="1.4"/></svg>
<div class="a" style="left:1727px;top:127px;width:1px;height:20px;background:#d3e3fd"></div>
<svg class="a" style="left:1742px;top:128px" width="17" height="18" viewBox="0 0 17 18"><path d="M8.5 13V2M3.5 7l5-5 5 5" stroke="#474747" stroke-width="1.8" fill="none"/><path d="M1 12.5v4h15v-4" stroke="#474747" stroke-width="1.8" fill="none"/></svg>
<div class="a" style="left:1804px;top:127px;width:1px;height:20px;background:#d3e3fd"></div>
<svg class="a" style="left:1816px;top:127px" width="20" height="20" viewBox="0 0 20 20"><path d="M8.3 1.5h3.4l.5 2.4 1.6.9 2.3-.8 1.7 2.9-1.8 1.6v1.9l1.8 1.6-1.7 2.9-2.3-.8-1.6.9-.5 2.4H8.3l-.5-2.4-1.6-.9-2.3.8-1.7-2.9 1.8-1.6V9.1L2.2 7.5l1.7-2.9 2.3.8 1.6-.9z" stroke="#474747" stroke-width="1.6" fill="none" stroke-linejoin="round"/><circle cx="10" cy="10" r="2.6" stroke="#474747" stroke-width="1.6" fill="none"/></svg>
<svg class="a" style="left:1133px;top:160px" width="17" height="18" viewBox="0 0 17 18"><path d="M8.5 1v11M3.5 7l5 5 5-5" stroke="#474747" stroke-width="1.8" fill="none"/><path d="M1 12.5v4h15v-4" stroke="#474747" stroke-width="1.8" fill="none"/></svg>

<!-- filter row -->
<div class="a" style="left:1127px;top:191px;width:493px;height:25px;border-radius:13px;background:#e9eef6"></div>
<svg class="a" style="left:1140px;top:197px" width="14" height="14" viewBox="0 0 14 14"><path d="M1 1.5h12L8.2 7.5V13H5.8V7.5z" stroke="#474747" stroke-width="1.5" fill="none" stroke-linejoin="round"/></svg>
<div class="a nw dtt" style="left:1162px;top:196px;color:#474747">Filter</div>
<div class="a" style="left:1635px;top:196px;width:15px;height:15px;border:1.5px solid #474747;border-radius:2px"></div>
<div class="a nw dtt" style="left:1658px;top:196px">Invert</div>
<div class="a" style="left:1711px;top:193px;width:1px;height:20px;background:#d3e3fd"></div>
<div class="a nw dtt" style="left:1735px;top:196px">More filters</div>
<svg class="a" style="left:1824px;top:201px" width="10" height="8" viewBox="0 0 10 8"><path d="M0 0h10L5 8z" fill="#474747"/></svg>
<!-- chips -->
<div class="a chip" style="left:1126px;width:32px;background:#d3e3fd;border-color:#d3e3fd">All</div>
<div class="a" style="left:1164px;top:226px;width:1px;height:19px;background:#d3e3fd"></div>
<div class="a chip" style="left:1170px;width:84px">Fetch/XHR</div>
<div class="a chip" style="left:1259px;width:40px">Doc</div>
<div class="a chip" style="left:1304px;width:38px">CSS</div>
<div class="a chip" style="left:1347px;width:30px">JS</div>
<div class="a chip" style="left:1382px;width:44px">Font</div>
<div class="a chip" style="left:1431px;width:38px">Img</div>
<div class="a chip" style="left:1475px;width:55px">Media</div>
<div class="a chip" style="left:1535px;width:71px">Manifest</div>
<div class="a chip" style="left:1611px;width:58px">Socket</div>
<div class="a chip" style="left:1674px;width:53px">Wasm</div>
<div class="a chip" style="left:1732px;width:53px">Other</div>
<div class="a" style="left:1121px;top:250px;width:729px;height:1px;background:#d3e3fd"></div>

<!-- timeline -->
<div id="tl" class="a" style="left:1121px;top:251px;width:729px;height:100px;background:#fff"></div>
<div class="a" style="left:1206px;top:251px;width:1px;height:100px;background:#d3e3fd"></div>
<div class="a nw tlab" style="left:1103px;width:100px">20,000 ms</div>
<div class="a" style="left:1291.5px;top:251px;width:1px;height:100px;background:#d3e3fd"></div>
<div class="a nw tlab" style="left:1188.5px;width:100px">40,000 ms</div>
<div class="a" style="left:1376.5px;top:251px;width:1px;height:100px;background:#d3e3fd"></div>
<div class="a nw tlab" style="left:1273.5px;width:100px">60,000 ms</div>
<div class="a" style="left:1461.5px;top:251px;width:1px;height:100px;background:#d3e3fd"></div>
<div class="a nw tlab" style="left:1358.5px;width:100px">80,000 ms</div>
<div class="a" style="left:1546.5px;top:251px;width:1px;height:100px;background:#d3e3fd"></div>
<div class="a nw tlab" style="left:1443.5px;width:100px">100,000 ms</div>
<div class="a" style="left:1631.5px;top:251px;width:1px;height:100px;background:#d3e3fd"></div>
<div class="a nw tlab" style="left:1528.5px;width:100px">120,000 ms</div>
<div class="a" style="left:1718px;top:251px;width:1px;height:100px;background:#d3e3fd"></div>
<div class="a nw tlab" style="left:1615px;width:100px">140,000 ms</div>
<div class="a" style="left:1803px;top:251px;width:1px;height:100px;background:#d3e3fd"></div>
<div class="a nw tlab" style="left:1700px;width:100px">160,000 ms</div>
<div class="a nw tlab" style="left:1822px;width:60px;text-align:left">180</div>
<div class="a" style="left:1123px;top:286px;width:10px;height:3px;background:#4f86ec"></div>
<div class="a" style="left:1135px;top:286px;width:11px;height:3px;background:#4f86ec"></div>
<div class="a" style="left:1148px;top:286px;width:10px;height:3px;background:#4f86ec"></div>
<div class="a" style="left:1160px;top:286px;width:11px;height:3px;background:#4f86ec"></div>
<div class="a" style="left:1228.5px;top:276px;width:1.5px;height:75px;background:#4f86ec"></div>
<div class="a" style="left:1232px;top:276px;width:1.2px;height:75px;background:#4f86ec"></div>
<div class="a" style="left:1233.6px;top:276px;width:1.2px;height:75px;background:#c94a4a"></div>
<div class="a" style="left:1235px;top:283px;width:15px;height:3px;background:#dcdcdc"></div>
<div class="a" style="left:1253px;top:283px;width:20px;height:3px;background:#dcdcdc"></div>
<div class="a" style="left:1231.5px;top:286.5px;width:11.5px;height:3px;background:#4f86ec"></div>
<div class="a" style="left:1230px;top:290px;width:11px;height:3px;background:#4f86ec"></div>
<div class="a" style="left:1237px;top:294px;width:11px;height:3px;background:#4f86ec"></div>
<div class="a" style="left:1252px;top:294px;width:8px;height:3px;background:#4f86ec"></div>
<div class="a" style="left:1262px;top:294px;width:11px;height:3px;background:#4f86ec"></div>
<div class="a" style="left:1234px;top:298px;width:11px;height:3px;background:#4f86ec"></div>
<div class="a" style="left:1403px;top:283px;width:11px;height:3px;background:#dcdcdc"></div>
<div class="a" style="left:1407px;top:301px;width:12px;height:3px;background:#4f86ec"></div>
<div class="a" style="left:1443px;top:283px;width:20px;height:3px;background:#dcdcdc"></div>
<div class="a" style="left:1443px;top:286px;width:9px;height:3px;background:#4f86ec"></div>
<div class="a" style="left:1454px;top:286px;width:9px;height:3px;background:#4f86ec"></div>
<div class="a" style="left:1670px;top:286px;width:12px;height:3px;background:#4f86ec"></div>
<div class="a" style="left:1701px;top:286px;width:12px;height:3px;background:#4f86ec"></div>
<div class="a" style="left:1752px;top:303px;width:24px;height:12px;background:#d3e3fd"></div>
<div class="a" style="left:1755px;top:305px;width:18px;height:5px;background:#2ca35a"></div>
<div class="a" style="left:1776px;top:308px;width:9px;height:2px;background:#4f86ec"></div>
<div class="a" style="left:1121px;top:251px;width:2px;height:100px;background:#c2d7f8"></div><div class="a" style="left:1121px;top:254px;width:4px;height:17px;background:#a8c7fa;border-radius:0 2px 2px 0"></div><div class="a" style="left:1847px;top:251px;width:2px;height:100px;background:#c2d7f8"></div>
<div class="a" style="left:1122px;top:257px;width:1.5px;height:11px;background:#0b57d0"></div>
<div class="a" style="left:1843px;top:254px;width:6px;height:17px;background:#a8c7fa;border-radius:2px 0 0 2px"></div>
<div class="a" style="left:1845px;top:257px;width:1.5px;height:11px;background:#0b57d0"></div>

<div class="a" style="left:1121px;top:351px;width:180px;height:34px;background:#f8f9fd;border-bottom:1px solid #d3e3fd"></div>
<div class="a nw dtt" style="left:1127px;top:360px">Name</div>
<svg class="a" style="left:1304px;top:358px" width="9" height="5" viewBox="0 0 9 5"><path d="M0 5L4.5 0L9 5z" fill="#7a7a7a"/></svg>
<div class="a" style="left:1316px;top:351px;width:1px;height:502px;background:#d3e3fd"></div>
<div class="a" style="left:1121px;top:385px;width:180px;height:435px;overflow:hidden">
 <div class="a" style="left:0;top:-11.80px;width:180px;height:26.57px;background:#f5f7fc">
  <svg class="a" style="left:7px;top:7px" width="16" height="13" viewBox="0 0 16 13"><path d="M4.5 0.8C2.5 0.8 2.8 2.5 2.8 4.2S2 6.5 0.8 6.5C2 6.5 2.8 7.2 2.8 8.8S2.5 12.2 4.5 12.2M11.5 0.8C13.5 0.8 13.2 2.5 13.2 4.2S14 6.5 15.2 6.5C14 6.5 13.2 7.2 13.2 8.8S13.5 12.2 11.5 12.2" stroke="#e8590c" stroke-width="1.4" fill="none"/><circle cx="8" cy="3.5" r="1" fill="#e8590c"/><path d="M8 6v5" stroke="#e8590c" stroke-width="1.5"/></svg>
  <div class="a nw dtn" style="left:29px;top:4px;color:#1f1f1f">getNotification?api...</div>
 </div>
 <div class="a" style="left:0;top:14.47px;width:180px;height:26.57px;background:#fff">
  <svg class="a" style="left:7px;top:7px" width="16" height="13" viewBox="0 0 16 13"><path d="M4.5 0.8C2.5 0.8 2.8 2.5 2.8 4.2S2 6.5 0.8 6.5C2 6.5 2.8 7.2 2.8 8.8S2.5 12.2 4.5 12.2M11.5 0.8C13.5 0.8 13.2 2.5 13.2 4.2S14 6.5 15.2 6.5C14 6.5 13.2 7.2 13.2 8.8S13.5 12.2 11.5 12.2" stroke="#e8590c" stroke-width="1.4" fill="none"/><circle cx="8" cy="3.5" r="1" fill="#e8590c"/><path d="M8 6v5" stroke="#e8590c" stroke-width="1.5"/></svg>
  <div class="a nw dtn" style="left:29px;top:4px;color:#1f1f1f">getNotification?api...</div>
 </div>
 <div class="a" style="left:0;top:40.74px;width:180px;height:26.57px;background:#f5f7fc">
  <svg class="a" style="left:7px;top:5px" width="16" height="16" viewBox="0 0 16 16"><circle cx="8" cy="8" r="8" fill="#dc362e"/><path d="M5 5l6 6M11 5l-6 6" stroke="#fff" stroke-width="1.6"/></svg>
  <div class="a nw dtn" style="left:29px;top:4px;color:#b3261e">assets/</div>
 </div>
 <div class="a" style="left:0;top:67.01px;width:180px;height:26.57px;background:#fff">
  <div class="a nw dtn" style="left:29px;top:4px;color:#1f1f1f">smLogo.png</div>
 </div>
 <div class="a" style="left:0;top:93.28px;width:180px;height:26.57px;background:#f5f7fc">
  <svg class="a" style="left:7px;top:7px" width="16" height="13" viewBox="0 0 16 13"><path d="M4.5 0.8C2.5 0.8 2.8 2.5 2.8 4.2S2 6.5 0.8 6.5C2 6.5 2.8 7.2 2.8 8.8S2.5 12.2 4.5 12.2M11.5 0.8C13.5 0.8 13.2 2.5 13.2 4.2S14 6.5 15.2 6.5C14 6.5 13.2 7.2 13.2 8.8S13.5 12.2 11.5 12.2" stroke="#e8590c" stroke-width="1.4" fill="none"/><circle cx="8" cy="3.5" r="1" fill="#e8590c"/><path d="M8 6v5" stroke="#e8590c" stroke-width="1.5"/></svg>
  <div class="a nw dtn" style="left:29px;top:4px;color:#1f1f1f">getRegistrationDat...</div>
 </div>
 <div class="a" style="left:0;top:119.55px;width:180px;height:26.57px;background:#fff">
  <div class="a" style="left:17px;top:15px;width:4px;height:4px;border-radius:2px;background:#1e8e3e"></div>
  <div class="a nw dtn" style="left:29px;top:4px;color:#1f1f1f">icon-user-active.png</div>
 </div>
 <div class="a" style="left:0;top:145.82px;width:180px;height:26.57px;background:#f5f7fc">
  <svg class="a" style="left:7px;top:7px" width="16" height="13" viewBox="0 0 16 13"><path d="M4.5 0.8C2.5 0.8 2.8 2.5 2.8 4.2S2 6.5 0.8 6.5C2 6.5 2.8 7.2 2.8 8.8S2.5 12.2 4.5 12.2M11.5 0.8C13.5 0.8 13.2 2.5 13.2 4.2S14 6.5 15.2 6.5C14 6.5 13.2 7.2 13.2 8.8S13.5 12.2 11.5 12.2" stroke="#e8590c" stroke-width="1.4" fill="none"/><circle cx="8" cy="3.5" r="1" fill="#e8590c"/><path d="M8 6v5" stroke="#e8590c" stroke-width="1.5"/></svg>
  <div class="a nw dtn" style="left:29px;top:4px;color:#1f1f1f">getCallTypesV1?ap...</div>
 </div>
 <div class="a" style="left:0;top:172.09px;width:180px;height:26.57px;background:#fff">
  <svg class="a" style="left:7px;top:7px" width="16" height="13" viewBox="0 0 16 13"><path d="M4.5 0.8C2.5 0.8 2.8 2.5 2.8 4.2S2 6.5 0.8 6.5C2 6.5 2.8 7.2 2.8 8.8S2.5 12.2 4.5 12.2M11.5 0.8C13.5 0.8 13.2 2.5 13.2 4.2S14 6.5 15.2 6.5C14 6.5 13.2 7.2 13.2 8.8S13.5 12.2 11.5 12.2" stroke="#e8590c" stroke-width="1.4" fill="none"/><circle cx="8" cy="3.5" r="1" fill="#e8590c"/><path d="M8 6v5" stroke="#e8590c" stroke-width="1.5"/></svg>
  <div class="a nw dtn" style="left:29px;top:4px;color:#1f1f1f">getAgentState?api...</div>
 </div>
 <div class="a" style="left:0;top:198.36px;width:180px;height:26.57px;background:#f5f7fc">
  <svg class="a" style="left:7px;top:7px" width="16" height="13" viewBox="0 0 16 13"><path d="M4.5 0.8C2.5 0.8 2.8 2.5 2.8 4.2S2 6.5 0.8 6.5C2 6.5 2.8 7.2 2.8 8.8S2.5 12.2 4.5 12.2M11.5 0.8C13.5 0.8 13.2 2.5 13.2 4.2S14 6.5 15.2 6.5C14 6.5 13.2 7.2 13.2 8.8S13.5 12.2 11.5 12.2" stroke="#e8590c" stroke-width="1.4" fill="none"/><circle cx="8" cy="3.5" r="1" fill="#e8590c"/><path d="M8 6v5" stroke="#e8590c" stroke-width="1.5"/></svg>
  <div class="a nw dtn" style="left:29px;top:4px;color:#1f1f1f">getLanguageList?a...</div>
 </div>
 <div class="a" style="left:0;top:224.63px;width:180px;height:26.57px;background:#fff">
  <svg class="a" style="left:7px;top:7px" width="16" height="13" viewBox="0 0 16 13"><path d="M4.5 0.8C2.5 0.8 2.8 2.5 2.8 4.2S2 6.5 0.8 6.5C2 6.5 2.8 7.2 2.8 8.8S2.5 12.2 4.5 12.2M11.5 0.8C13.5 0.8 13.2 2.5 13.2 4.2S14 6.5 15.2 6.5C14 6.5 13.2 7.2 13.2 8.8S13.5 12.2 11.5 12.2" stroke="#e8590c" stroke-width="1.4" fill="none"/><circle cx="8" cy="3.5" r="1" fill="#e8590c"/><path d="M8 6v5" stroke="#e8590c" stroke-width="1.5"/></svg>
  <div class="a nw dtn" style="left:29px;top:4px;color:#1f1f1f">getAgentCallStats?...</div>
 </div>
 <div class="a" style="left:0;top:250.90px;width:180px;height:26.57px;background:#f5f7fc">
  <svg class="a" style="left:7px;top:7px" width="16" height="13" viewBox="0 0 16 13"><path d="M4.5 0.8C2.5 0.8 2.8 2.5 2.8 4.2S2 6.5 0.8 6.5C2 6.5 2.8 7.2 2.8 8.8S2.5 12.2 4.5 12.2M11.5 0.8C13.5 0.8 13.2 2.5 13.2 4.2S14 6.5 15.2 6.5C14 6.5 13.2 7.2 13.2 8.8S13.5 12.2 11.5 12.2" stroke="#e8590c" stroke-width="1.4" fill="none"/><circle cx="8" cy="3.5" r="1" fill="#e8590c"/><path d="M8 6v5" stroke="#e8590c" stroke-width="1.5"/></svg>
  <div class="a nw dtn" style="left:29px;top:4px;color:#1f1f1f">beneficiaryByCallI...</div>
 </div>
 <div class="a" style="left:0;top:277.17px;width:180px;height:26.57px;background:#fff">
  <svg class="a" style="left:7px;top:7px" width="16" height="13" viewBox="0 0 16 13"><path d="M4.5 0.8C2.5 0.8 2.8 2.5 2.8 4.2S2 6.5 0.8 6.5C2 6.5 2.8 7.2 2.8 8.8S2.5 12.2 4.5 12.2M11.5 0.8C13.5 0.8 13.2 2.5 13.2 4.2S14 6.5 15.2 6.5C14 6.5 13.2 7.2 13.2 8.8S13.5 12.2 11.5 12.2" stroke="#e8590c" stroke-width="1.4" fill="none"/><circle cx="8" cy="3.5" r="1" fill="#e8590c"/><path d="M8 6v5" stroke="#e8590c" stroke-width="1.5"/></svg>
  <div class="a nw dtn" style="left:29px;top:4px;color:#1f1f1f">English.json</div>
 </div>
 <div class="a" style="left:0;top:303.44px;width:180px;height:26.57px;background:#f5f7fc">
  <svg class="a" style="left:7px;top:7px" width="16" height="13" viewBox="0 0 16 13"><path d="M4.5 0.8C2.5 0.8 2.8 2.5 2.8 4.2S2 6.5 0.8 6.5C2 6.5 2.8 7.2 2.8 8.8S2.5 12.2 4.5 12.2M11.5 0.8C13.5 0.8 13.2 2.5 13.2 4.2S14 6.5 15.2 6.5C14 6.5 13.2 7.2 13.2 8.8S13.5 12.2 11.5 12.2" stroke="#e8590c" stroke-width="1.4" fill="none"/><circle cx="8" cy="3.5" r="1" fill="#e8590c"/><path d="M8 6v5" stroke="#e8590c" stroke-width="1.5"/></svg>
  <div class="a nw dtn" style="left:29px;top:4px;color:#1f1f1f">getNotificationTyp...</div>
 </div>
 <div class="a" style="left:0;top:329.71px;width:180px;height:26.57px;background:#fff">
  <svg class="a" style="left:7px;top:7px" width="16" height="13" viewBox="0 0 16 13"><path d="M4.5 0.8C2.5 0.8 2.8 2.5 2.8 4.2S2 6.5 0.8 6.5C2 6.5 2.8 7.2 2.8 8.8S2.5 12.2 4.5 12.2M11.5 0.8C13.5 0.8 13.2 2.5 13.2 4.2S14 6.5 15.2 6.5C14 6.5 13.2 7.2 13.2 8.8S13.5 12.2 11.5 12.2" stroke="#e8590c" stroke-width="1.4" fill="none"/><circle cx="8" cy="3.5" r="1" fill="#e8590c"/><path d="M8 6v5" stroke="#e8590c" stroke-width="1.5"/></svg>
  <div class="a nw dtn" style="left:29px;top:4px;color:#1f1f1f">getRolesByProvide...</div>
 </div>
 <div class="a" style="left:0;top:355.98px;width:180px;height:26.57px;background:#f5f7fc">
  <svg class="a" style="left:7px;top:7px" width="16" height="13" viewBox="0 0 16 13"><path d="M4.5 0.8C2.5 0.8 2.8 2.5 2.8 4.2S2 6.5 0.8 6.5C2 6.5 2.8 7.2 2.8 8.8S2.5 12.2 4.5 12.2M11.5 0.8C13.5 0.8 13.2 2.5 13.2 4.2S14 6.5 15.2 6.5C14 6.5 13.2 7.2 13.2 8.8S13.5 12.2 11.5 12.2" stroke="#e8590c" stroke-width="1.4" fill="none"/><circle cx="8" cy="3.5" r="1" fill="#e8590c"/><path d="M8 6v5" stroke="#e8590c" stroke-width="1.5"/></svg>
  <div class="a nw dtn" style="left:29px;top:4px;color:#1f1f1f">getSupervisorNoti...</div>
 </div>
 <div class="a" style="left:0;top:382.25px;width:180px;height:26.57px;background:#e1e3e1">
  <svg class="a" style="left:7px;top:7px" width="16" height="13" viewBox="0 0 16 13"><path d="M4.5 0.8C2.5 0.8 2.8 2.5 2.8 4.2S2 6.5 0.8 6.5C2 6.5 2.8 7.2 2.8 8.8S2.5 12.2 4.5 12.2M11.5 0.8C13.5 0.8 13.2 2.5 13.2 4.2S14 6.5 15.2 6.5C14 6.5 13.2 7.2 13.2 8.8S13.5 12.2 11.5 12.2" stroke="#e8590c" stroke-width="1.4" fill="none"/><circle cx="8" cy="3.5" r="1" fill="#e8590c"/><path d="M8 6v5" stroke="#e8590c" stroke-width="1.5"/></svg>
  <div class="a nw dtn" style="left:29px;top:4px;color:#1f1f1f">updateNotification...</div>
 </div>
 <div class="a" style="left:0;top:408.52px;width:180px;height:26.57px;background:#f5f7fc">
  <svg class="a" style="left:7px;top:7px" width="16" height="13" viewBox="0 0 16 13"><path d="M4.5 0.8C2.5 0.8 2.8 2.5 2.8 4.2S2 6.5 0.8 6.5C2 6.5 2.8 7.2 2.8 8.8S2.5 12.2 4.5 12.2M11.5 0.8C13.5 0.8 13.2 2.5 13.2 4.2S14 6.5 15.2 6.5C14 6.5 13.2 7.2 13.2 8.8S13.5 12.2 11.5 12.2" stroke="#e8590c" stroke-width="1.4" fill="none"/><circle cx="8" cy="3.5" r="1" fill="#e8590c"/><path d="M8 6v5" stroke="#e8590c" stroke-width="1.5"/></svg>
  <div class="a nw dtn" style="left:29px;top:4px;color:#1f1f1f">getSupervisorNoti...</div>
 </div>
</div>
<div class="a" style="left:1304px;top:708px;width:9px;height:94px;border-radius:5px;background:#8a8a8a"></div>
<svg class="a" style="left:1305px;top:808px" width="8" height="5" viewBox="0 0 8 5"><path d="M0 0h8L4 5z" fill="#8a8a8a"/></svg>
<div class="a" style="left:1317px;top:351px;width:533px;height:34px;background:#edf2fa;border-bottom:1px solid #d3e3fd"></div>
<svg class="a" style="left:1336px;top:362px" width="13" height="13" viewBox="0 0 13 13"><path d="M1 1l11 11M12 1L1 12" stroke="#474747" stroke-width="1.6"/></svg>
<div class="a nw dtt med" style="left:1374.5px;top:362px;color:#1f1f1f">Headers</div>
<div class="a nw dtt med" style="left:1458px;top:362px;color:#1f1f1f">Payload</div>
<div class="a nw dtt med" style="left:1539.5px;top:362px;color:#1f1f1f">Preview</div>
<div class="a nw dtt med" style="left:1622px;top:362px;color:#0b57d0">Response</div>
<div class="a nw dtt med" style="left:1714.5px;top:362px;color:#1f1f1f">Initiator</div>
<div class="a" style="left:1609px;top:382px;width:93px;height:3px;background:#0b57d0;border-radius:3px 3px 0 0"></div>
<svg class="a" style="left:1790px;top:362px" width="16" height="13" viewBox="0 0 16 13"><path d="M2 1.5l5 5-5 5M9 1.5l5 5-5 5" stroke="#474747" stroke-width="1.6" fill="none"/></svg>
<div class="a" style="left:1317px;top:385px;width:519px;height:420px;overflow:hidden;background:#fff">
 <div class="a nw mono" style="-webkit-text-stroke:0;left:39.5px;top:-2.80px;color:#0b57d0">-</div>
 <div class="a nw mono" style="left:108.40px;top:-2.80px"><span style="color:#b8281e">"data"</span><span style="color:#1f1f1f">: </span><span style="color:#1f1f1f">{</span></div>
 <div class="a nw mono" style="-webkit-text-stroke:0;left:39.5px;top:16.44px;color:#0b57d0">-</div>
 <div class="a nw mono" style="left:141.15px;top:16.44px"><span style="color:#b8281e">"validTill"</span><span style="color:#1f1f1f">: </span><span style="color:#b8281e">"2045-12-15T18:29:59.000Z"</span><span style="color:#1f1f1f">,</span></div>
 <div class="a nw mono" style="-webkit-text-stroke:0;left:39.5px;top:35.68px;color:#0b57d0">-</div>
 <div class="a nw mono" style="left:141.15px;top:35.68px"><span style="color:#b8281e">"roleID"</span><span style="color:#1f1f1f">: </span><span style="color:#1a5fd6">13</span><span style="color:#1f1f1f">,</span></div>
 <div class="a nw mono" style="-webkit-text-stroke:0;left:39.5px;top:54.92px;color:#0b57d0">-</div>
 <div class="a nw mono" style="left:141.15px;top:54.92px"><span style="color:#b8281e">"kmFileManager"</span><span style="color:#1f1f1f">: </span><span style="color:#1f1f1f">{</span></div>
 <div class="a nw mono" style="-webkit-text-stroke:0;left:39.5px;top:74.16px;color:#0b57d0">-</div>
 <div class="a nw mono" style="left:173.90px;top:74.16px"><span style="color:#b8281e">"fileName"</span><span style="color:#1f1f1f">: </span><span style="color:#b8281e">"AAM-1419.docx"</span><span style="color:#1f1f1f">,</span></div>
 <div class="a nw mono" style="-webkit-text-stroke:0;left:39.5px;top:93.40px;color:#0b57d0">-</div>
 <div class="a nw mono" style="left:173.90px;top:93.40px"><span style="color:#b8281e">"validUpto"</span><span style="color:#1f1f1f">: </span><span style="color:#b8281e">"2045-12-15T18:29:59.000Z"</span><span style="color:#1f1f1f">,</span></div>
 <div class="a nw mono" style="-webkit-text-stroke:0;left:39.5px;top:112.64px;color:#0b57d0">-</div>
 <div class="a nw mono" style="left:173.90px;top:112.64px"><span style="color:#b8281e">"providerServiceMapID"</span><span style="color:#1f1f1f">: </span><span style="color:#1a5fd6">1</span><span style="color:#1f1f1f">,</span></div>
 <div class="a nw mono" style="-webkit-text-stroke:0;left:39.5px;top:131.88px;color:#0b57d0">-</div>
 <div class="a nw mono" style="left:173.90px;top:131.88px"><span style="color:#b8281e">"validFrom"</span><span style="color:#1f1f1f">: </span><span style="color:#b8281e">"2025-12-14T18:30:00.000Z"</span><span style="color:#1f1f1f">,</span></div>
 <div class="a nw mono" style="-webkit-text-stroke:0;left:39.5px;top:151.12px;color:#0b57d0">-</div>
 <div class="a nw mono" style="left:173.90px;top:151.12px"><span style="color:#b8281e">"userID"</span><span style="color:#1f1f1f">: </span><span style="color:#1a5fd6">116</span><span style="color:#1f1f1f">,</span></div>
 <div class="a nw mono" style="-webkit-text-stroke:0;left:39.5px;top:170.36px;color:#0b57d0">-</div>
 <div class="a nw mono" style="left:173.90px;top:170.36px"><span style="color:#b8281e">"createdBy"</span><span style="color:#1f1f1f">: </span><span style="color:#b8281e">"Dimpi"</span><span style="color:#1f1f1f">,</span></div>
 <div class="a nw mono" style="-webkit-text-stroke:0;left:39.5px;top:189.60px;color:#0b57d0">-</div>
 <div class="a nw mono" style="left:173.90px;top:189.60px"><span style="color:#b8281e">"fileExtension"</span><span style="color:#1f1f1f">: </span><span style="color:#b8281e">".docx"</span><span style="color:#1f1f1f">,</span></div>
 <div class="a nw mono" style="-webkit-text-stroke:0;left:39.5px;top:208.84px;color:#0b57d0">-</div>
 <div class="a nw mono" style="left:173.90px;top:208.84px"><span style="color:#b8281e">"isUploaded"</span><span style="color:#1f1f1f">: </span><span style="color:#0d1a5a">false</span><span style="color:#1f1f1f">,</span></div>
 <div class="a nw mono" style="-webkit-text-stroke:0;left:39.5px;top:228.08px;color:#0b57d0">-</div>
 <div class="a nw mono" style="left:173.90px;top:228.08px"><span style="color:#b8281e">"fileContent"</span><span style="color:#1f1f1f">: </span><span style="color:#b8281e">"UEsDBBQACAgIAKZbtloAAAAAAAAAAAAAAAAAAAA</span></div>
 <div class="a nw mono" style="-webkit-text-stroke:0;left:39.5px;top:247.32px;color:#0b57d0">-</div>
 <div class="a nw mono" style="left:141.15px;top:247.32px"><span style="color:#1f1f1f">},</span></div>
 <div class="a nw mono" style="-webkit-text-stroke:0;left:39.5px;top:266.56px;color:#0b57d0">-</div>
 <div class="a nw mono" style="left:141.15px;top:266.56px"><span style="color:#b8281e">"providerServiceMapID"</span><span style="color:#1f1f1f">: </span><span style="color:#1a5fd6">1</span><span style="color:#1f1f1f">,</span></div>
 <div class="a nw mono" style="-webkit-text-stroke:0;left:39.5px;top:285.80px;color:#0b57d0">-</div>
 <div class="a nw mono" style="left:141.15px;top:285.80px"><span style="color:#b8281e">"validFrom"</span><span style="color:#1f1f1f">: </span><span style="color:#b8281e">"2025-12-14T18:30:00.000Z"</span><span style="color:#1f1f1f">,</span></div>
 <div class="a nw mono" style="-webkit-text-stroke:0;left:39.5px;top:305.04px;color:#0b57d0">-</div>
 <div class="a nw mono" style="left:141.15px;top:305.04px"><span style="color:#b8281e">"notification"</span><span style="color:#1f1f1f">: </span><span style="color:#b8281e">"Test subject"</span><span style="color:#1f1f1f">,</span></div>
 <div class="a nw mono" style="-webkit-text-stroke:0;left:39.5px;top:324.28px;color:#0b57d0">-</div>
 <div class="a nw mono" style="left:141.15px;top:324.28px"><span style="color:#b8281e">"notificationDesc"</span><span style="color:#1f1f1f">: </span><span style="color:#b8281e">"Test resource management"</span><span style="color:#1f1f1f">,</span></div>
 <div class="a nw mono" style="-webkit-text-stroke:0;left:39.5px;top:343.52px;color:#0b57d0">-</div>
 <div class="a nw mono" style="left:141.15px;top:343.52px"><span style="color:#b8281e">"notificationTypeID"</span><span style="color:#1f1f1f">: </span><span style="color:#1a5fd6">20</span><span style="color:#1f1f1f">,</span></div>
 <div class="a nw mono" style="-webkit-text-stroke:0;left:39.5px;top:362.76px;color:#0b57d0">-</div>
 <div class="a nw mono" style="left:141.15px;top:362.76px"><span style="color:#b8281e">"updatecount"</span><span style="color:#1f1f1f">: </span><span style="color:#1a5fd6">1</span><span style="color:#1f1f1f">,</span></div>
 <div class="a nw mono" style="-webkit-text-stroke:0;left:39.5px;top:382.00px;color:#0b57d0">-</div>
 <div class="a nw mono" style="left:141.15px;top:382.00px"><span style="color:#b8281e">"deleted"</span><span style="color:#1f1f1f">: </span><span style="color:#0d1a5a">false</span><span style="color:#1f1f1f">,</span></div>
 <div class="a nw mono" style="-webkit-text-stroke:0;left:39.5px;top:401.24px;color:#0b57d0">-</div>
 <div class="a nw mono" style="left:141.15px;top:401.24px"><span style="color:#b8281e">"notificationID"</span><span style="color:#1f1f1f">: </span><span style="color:#1a5fd6">69</span></div>
 <div class="a" style="left:72px;top:0;width:1px;height:420px;background:#8ab4f8"></div>
 <div class="a" style="left:105px;top:15px;width:1px;height:405px;background:#e3ebf9"></div>
 <div class="a" style="left:138px;top:73px;width:1px;height:173px;background:#e3ebf9"></div>
</div>
<div class="a" style="left:1836px;top:385px;width:14px;height:420px;background:#fbfbfb"></div>
<svg class="a" style="left:1838px;top:391px" width="9" height="5" viewBox="0 0 9 5"><path d="M0 5L4.5 0L9 5z" fill="#7a7a7a"/></svg>
<div class="a" style="left:1838px;top:414px;width:9px;height:171px;border-radius:5px;background:#8a8a8a"></div>
<svg class="a" style="left:1838px;top:793px" width="9" height="5" viewBox="0 0 9 5"><path d="M0 0h9L4.5 5z" fill="#7a7a7a"/></svg>
<div class="a" style="left:1317px;top:805px;width:533px;height:15px;background:#fafafa"></div>
<svg class="a" style="left:1322px;top:808px" width="6" height="9" viewBox="0 0 6 9"><path d="M6 0v9L0 4.5z" fill="#7a7a7a"/></svg>
<div class="a" style="left:1335px;top:809px;width:17px;height:7px;border-radius:4px;background:#8a8a8a"></div>
<svg class="a" style="left:1823px;top:808px" width="6" height="9" viewBox="0 0 6 9"><path d="M0 0v9L6 4.5z" fill="#7a7a7a"/></svg>
<div class="a" style="left:1121px;top:820px;width:729px;height:1px;background:#d3e3fd"></div>
<div class="a nw dtt" style="left:1133.5px;top:829px;color:#474747">81 requests</div>
<div class="a" style="left:1225px;top:828px;width:1px;height:19px;background:#d3e3fd"></div>
<div class="a nw dtt" style="left:1238px;top:829px;color:#474747;width:78px;overflow:hidden">14.9 MB transferred</div>
<div class="a nw" style="left:1326px;top:827px;font-size:17px;font-weight:bold;color:#0b57d0;letter-spacing:1.5px">{ }</div>
<div class="a" style="left:1121px;top:853px;width:729px;height:34px;background:#edf2fa"></div><div class="a" style="left:1121px;top:887px;width:729px;height:166px;background:#ebf1fc"></div>
<div class="a" style="left:1121px;top:853px;width:729px;height:1px;background:#d3e3fd"></div>
<div class="a" style="left:1121px;top:887px;width:729px;height:1px;background:#d3e3fd"></div>
<svg class="a" style="left:1138px;top:863px" width="6" height="16" viewBox="0 0 6 16"><circle cx="3" cy="2.5" r="1.7" fill="#474747"/><circle cx="3" cy="8" r="1.7" fill="#474747"/><circle cx="3" cy="13.5" r="1.7" fill="#474747"/></svg>
<div class="a nw dtt med" style="left:1168.5px;top:864px;color:#1f1f1f">Console</div>
<div class="a nw dtt med" style="left:1250px;top:864px;color:#1f1f1f">AI assistance</div>
<div class="a nw dtt med" style="left:1400px;top:864px;color:#0b57d0">What's new</div>
<div class="a nw dtt med" style="left:1518.5px;top:864px;color:#1f1f1f">Issues</div>
<div class="a nw dtt med" style="left:1598.5px;top:864px;color:#1f1f1f">Autofill</div>
<svg class="a" style="left:1345px;top:865px" width="13" height="13" viewBox="0 0 13 13"><path d="M4.5 1h4M5.3 1v4L1.5 12h10L7.7 5V1" stroke="#474747" stroke-width="1.4" fill="none" stroke-linejoin="round"/></svg>
<svg class="a" style="left:1484px;top:865px" width="12" height="12" viewBox="0 0 12 12"><path d="M1 1l10 10M11 1L1 11" stroke="#474747" stroke-width="1.5"/></svg>
<div class="a" style="left:1387px;top:884px;width:119px;height:3px;background:#0b57d0;border-radius:3px 3px 0 0"></div>
<svg class="a" style="left:1824px;top:864px" width="13" height="13" viewBox="0 0 13 13"><path d="M1 1l11 11M12 1L1 12" stroke="#474747" stroke-width="1.6"/></svg>
<svg class="a" style="left:1146px;top:907px" width="41" height="41" viewBox="0 0 41 41"><circle cx="20.5" cy="20.5" r="20" fill="#1a73e8"/><circle cx="20.5" cy="20.5" r="17" fill="none" stroke="#fff" stroke-width="1.6"/><circle cx="20.5" cy="20.5" r="7.5" fill="#fff"/><circle cx="20.5" cy="20.5" r="6" fill="#1a73e8"/><path d="M20.5 13H36.5M14 24.3L6 10.5M27 24.3L19 38" stroke="#fff" stroke-width="1.6"/></svg>
<div class="a nw" style="left:1199px;top:918px;font-size:20px;color:#1f1f1f;letter-spacing:0.25px;-webkit-text-stroke:0.55px #1f1f1f">What's new in DevTools 137</div>
<div class="a nw" style="left:1146px;top:968px;width:173px;height:30px;border-radius:15px;background:#0b57d0;color:#fff;font-size:14.5px;font-weight:bold;line-height:30px;text-align:center">See all new features</div>
<div class="a" style="left:1836px;top:888px;width:14px;height:165px;background:#fbfbfb"></div>
<svg class="a" style="left:1838px;top:894px" width="9" height="5" viewBox="0 0 9 5"><path d="M0 5L4.5 0L9 5z" fill="#7a7a7a"/></svg>
<div class="a" style="left:1838px;top:906px;width:9px;height:30px;border-radius:5px;background:#8a8a8a"></div>
<svg class="a" style="left:1838px;top:1041px" width="9" height="5" viewBox="0 0 9 5"><path d="M0 0h9L4.5 5z" fill="#7a7a7a"/></svg>
<div class="a" style="left:1122px;top:1023px;width:714px;height:40px;background:#fff;border-radius:24px 28px 0 0"></div>
<div class="a" style="left:1151px;top:1048px;width:141px;height:10px;background:#1a73e8;border-radius:12px 0 0 0"></div>
<div class="a" style="left:1292px;top:1048px;width:248px;height:10px;background:#eef0f2;border-radius:0 12px 0 0"></div>

</body></html>
